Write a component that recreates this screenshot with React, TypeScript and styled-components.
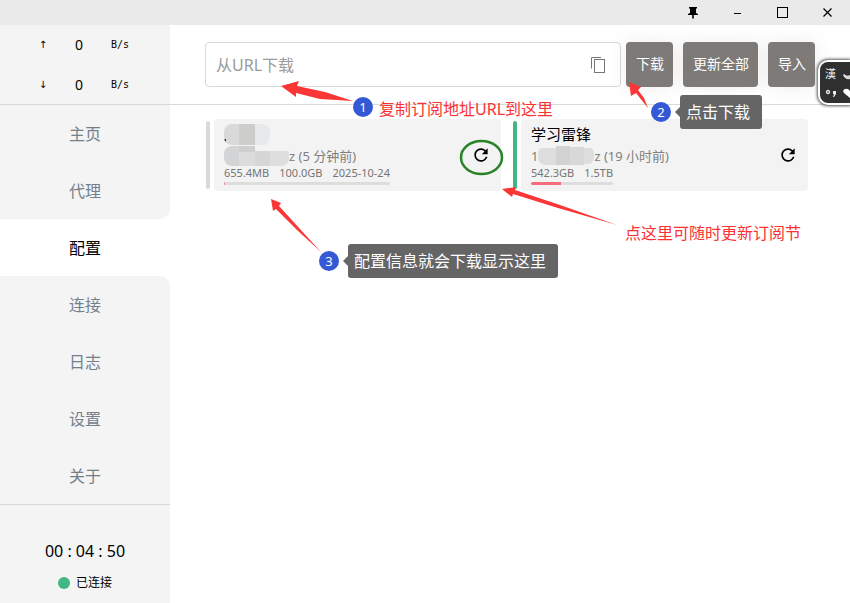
import React from "react";
import styled, { createGlobalStyle } from "styled-components";
import { MdRefresh } from "react-icons/md";

const GlobalStyle = createGlobalStyle`
  * { box-sizing: border-box; }
  body {
    margin: 0;
    background: #fff;
    color: #000;
    font-family: "Noto Sans", "Noto Sans CJK SC", sans-serif;
    font-size: 16px;
  }
  button, input { font-family: inherit; }
`;

const Page = styled.div`
  position: relative;
  display: flex;
  flex-direction: column;
  min-height: 100vh;
  overflow: hidden;
`;

const TitleBar = styled.header`
  display: flex;
  justify-content: flex-end;
  height: 25px;
  background: #eaeaea;
`;

const WindowButton = styled.button`
  display: flex;
  align-items: center;
  justify-content: center;
  width: 45px;
  padding: 0;
  border: 0;
  background: transparent;
`;

const Body = styled.div`
  display: flex;
  flex: 1;
`;

const Sidebar = styled.aside`
  display: flex;
  flex-direction: column;
  flex: 0 0 170px;
`;

const Traffic = styled.div`
  height: 80px;
  padding-left: 25px;
  background: #f4f4f4;
  border-bottom: 1px solid #d9d9d9;
`;

const TrafficRow = styled.div`
  display: grid;
  grid-template-columns: 36px 36px 46px;
  align-items: center;
  justify-items: center;
  height: 40px;
  font-size: 14px;
  line-height: 20px;
`;

const TrafficArrow = styled.span`
  font-family: "DejaVu Sans", sans-serif;
  font-size: 10px;
`;

const TrafficUnit = styled.span`
  font-family: "DejaVu Sans Mono", monospace;
  font-size: 10px;
`;

const Nav = styled.nav`
  display: flex;
  flex-direction: column;
`;

const NavLink = styled.a<{ $active?: boolean; $edge?: "above" | "below" }>`
  display: flex;
  align-items: center;
  justify-content: center;
  height: 57px;
  padding-bottom: 2px;
  text-decoration: none;
  color: ${(p) => (p.$active ? "#000" : "#73808c")};
  background: ${(p) => (p.$active ? "#fff" : "#f4f4f4")};
  border-bottom-right-radius: ${(p) => (p.$edge === "above" ? "10px" : "0")};
  border-top-right-radius: ${(p) => (p.$edge === "below" ? "10px" : "0")};
`;

const Status = styled.div`
  display: flex;
  flex: 1;
  flex-direction: column;
  align-items: center;
  gap: 10px;
  padding-top: 35px;
  background: #f4f4f4;
  border-top: 1px solid #d9d9d9;
  line-height: 22px;
`;

const Connection = styled.div`
  display: flex;
  align-items: center;
  gap: 6px;
  font-size: 12px;
`;

const Dot = styled.span`
  width: 12px;
  height: 12px;
  border-radius: 50%;
  background: #41b883;
`;

const Main = styled.main`
  flex: 1;
  min-width: 0;
`;

const Toolbar = styled.form`
  display: flex;
  gap: 10px;
  height: 80px;
  padding: 17px 35px;
  border-bottom: 1px solid #d9d9d9;
`;

const UrlField = styled.div`
  display: flex;
  flex: 1;
  align-items: center;
  height: 45px;
  margin-right: -5px;
  padding: 0 14px 0 10px;
  border: 1px solid #d8d8d8;
  border-radius: 4px;
  background: #fff;
`;

const UrlInput = styled.input`
  flex: 1;
  min-width: 0;
  padding: 0;
  border: 0;
  outline: 0;
  font-size: 16px;
  &::placeholder { color: #9b9b9b; }
`;

const IconButton = styled.button`
  display: flex;
  align-items: center;
  justify-content: center;
  padding: 0;
  border: 0;
  background: transparent;
  color: #000;
`;

const ActionButton = styled.button`
  height: 45px;
  padding: 0 9px 4px 10px;
  border: 0;
  border-radius: 4px;
  background: #7d7a78;
  color: #fff;
  font-size: 14px;
  white-space: nowrap;
  box-shadow: 0 0 20px rgba(0, 0, 0, 0.08);
`;

const Profiles = styled.div`
  display: grid;
  grid-template-columns: 1fr 1fr;
  gap: 12px;
  padding: 14px 42px 0 36px;
`;

const Profile = styled.article`
  display: flex;
  align-items: center;
  gap: 4px;
`;

const Marker = styled.span<{ $active?: boolean }>`
  width: 4px;
  height: 68px;
  border-radius: 2px;
  background: ${(p) => (p.$active ? "#41b883" : "#d9d9d9")};
`;

const Card = styled.div`
  display: flex;
  flex: 1;
  align-items: center;
  justify-content: space-between;
  height: 72px;
  padding: 0 10px;
  border-radius: 4px;
  background: #f3f3f3;
`;

const Details = styled.div`
  display: flex;
  flex-direction: column;
  align-items: flex-start;
  padding-bottom: 2px;
  white-space: nowrap;
`;

const Title = styled.div`
  display: flex;
  height: 22px;
  line-height: 20px;
  font-size: 15px;
`;

const Source = styled.div`
  display: flex;
  align-items: center;
  height: 20px;
  font-size: 13px;
  color: #808080;
`;

const Usage = styled.div`
  font-size: 11px;
  line-height: 14px;
  color: #757575;
`;

const Stats = styled.div`
  display: flex;
  gap: 10px;
`;

const Meter = styled.div`
  height: 3px;
  margin-top: 2px;
  border-radius: 2px;
  background: #dddddd;
  overflow: hidden;
`;

const MeterFill = styled.div`
  height: 3px;
  background: #f56c7c;
`;

const Drawing = styled.svg`
  position: absolute;
  top: 0;
  left: 0;
  width: 850px;
  height: 603px;
  pointer-events: none;
`;

const Note = styled.div<{ $x: number; $y: number }>`
  position: absolute;
  left: ${(p) => p.$x}px;
  top: ${(p) => p.$y}px;
  line-height: 24px;
  color: #fb3232;
  white-space: nowrap;
`;

const Badge = styled.div<{ $x: number; $y: number }>`
  position: absolute;
  left: ${(p) => p.$x}px;
  top: ${(p) => p.$y}px;
  width: 20px;
  height: 20px;
  border-radius: 50%;
  background: #3558d4;
  color: #fff;
  font-size: 13px;
  line-height: 20px;
  text-align: center;
`;

const Callout = styled.div<{ $x: number; $y: number }>`
  position: absolute;
  left: ${(p) => p.$x}px;
  top: ${(p) => p.$y}px;
  padding: 5px 12px 5px 6px;
  border-radius: 3px;
  background: #656565;
  color: #fff;
  line-height: 24px;
  white-space: nowrap;
  &::before {
    content: "";
    position: absolute;
    left: -5px;
    top: 12px;
    border: 5px solid transparent;
    border-left-width: 0;
    border-right-color: #656565;
  }
`;

const ImeBar = styled.div`
  position: absolute;
  right: 0;
  top: 60px;
  display: grid;
  grid-template-columns: 15px 8px;
  grid-template-rows: 19px 19px;
  align-items: center;
  column-gap: 2px;
  height: 45px;
  padding: 2px 0 2px 5px;
  border: 2px solid #fff;
  border-right: 0;
  border-radius: 10px 0 0 10px;
  background: #303030;
  color: #eee;
  font-size: 11px;
  line-height: 18px;
  box-shadow: 0 0 3px 1px #555;
`;

type Block = [x: number, y: number, w: number, h: number, fill: string];

function Mosaic({ id, width, height, blocks }: { id: string; width: number; height: number; blocks: Block[] }) {
  return (
    <svg width={width} height={height} aria-hidden="true">
      <clipPath id={id}>
        <rect width={width} height={height} rx="8" />
      </clipPath>
      <g clipPath={`url(#${id})`}>
        {blocks.map(([x, y, w, h, fill]) => (
          <rect key={`${x}-${y}`} x={x} y={y} width={w} height={h} fill={fill} />
        ))}
      </g>
    </svg>
  );
}

const navItems: { label: string; active?: boolean; edge?: "above" | "below" }[] = [
  { label: "主页" },
  { label: "代理", edge: "above" },
  { label: "配置", active: true },
  { label: "连接", edge: "below" },
  { label: "日志" },
  { label: "设置" },
  { label: "关于" },
];

const profiles = [
  {
    active: false,
    title: (
      <Mosaic id="name1" width={46} height={21} blocks={[
        [0, 0, 15, 21, "#d9d9d9"], [15, 0, 16, 21, "#cdcdcb"], [31, 0, 15, 21, "#e6e8ea"], [0, 15, 2, 3, "#333"],
      ]} />
    ),
    source: (
      <>
        <Mosaic id="host1" width={65} height={20} blocks={[
          [0, 0, 15, 20, "#d2d4d6"], [15, 0, 16, 6, "#cfcfcf"], [15, 6, 16, 14, "#dcdcdc"], [31, 5, 15, 15, "#d6d6d6"], [46, 5, 19, 15, "#dedede"],
        ]} />
        z (5 分钟前)
      </>
    ),
    stats: ["655.4MB", "100.0GB", "2025-10-24"],
    used: 0.5,
  },
  {
    active: true,
    title: "学习雷锋",
    source: (
      <>
        1
        <Mosaic id="host2" width={56} height={19} blocks={[
          [0, 2, 18, 17, "#dddddd"], [18, 0, 14, 19, "#d2d2d2"], [32, 1, 14, 18, "#d8d8d8"], [46, 2, 10, 16, "#dedede"],
        ]} />
        z (19 小时前)
      </>
    ),
    stats: ["542.3GB", "1.5TB"],
    used: 36,
  },
];

export default function App() {
  return (
    <Page>
      <GlobalStyle />
      <TitleBar>
        <WindowButton aria-label="置顶">
          <svg width="12" height="12" viewBox="0 0 12 12">
            <path d="M2 0H10V1.5H9V6L11 7V8H6.8V11L6 12L5.2 11V8H1V7L3 6V1.5H2Z" fill="#000" />
          </svg>
        </WindowButton>
        <WindowButton aria-label="最小化">
          <svg width="10" height="10" viewBox="0 0 10 10"><path d="M1 5.5H8" stroke="#000" /></svg>
        </WindowButton>
        <WindowButton aria-label="最大化">
          <svg width="11" height="11" viewBox="0 0 11 11"><rect x=".5" y=".5" width="10" height="10" fill="none" stroke="#000" /></svg>
        </WindowButton>
        <WindowButton aria-label="关闭">
          <svg width="9" height="9" viewBox="0 0 9 9"><path d="M.5 .5L8.5 8.5M8.5 .5L.5 8.5" stroke="#000" strokeWidth="1.2" /></svg>
        </WindowButton>
      </TitleBar>

      <Body>
        <Sidebar>
          <Traffic>
            {["↑", "↓"].map((arrow) => (
              <TrafficRow key={arrow}>
                <TrafficArrow>{arrow}</TrafficArrow>
                <span>0</span>
                <TrafficUnit>B/s</TrafficUnit>
              </TrafficRow>
            ))}
          </Traffic>
          <Nav>
            {navItems.map((item) => (
              <NavLink key={item.label} href="#" $active={item.active} $edge={item.edge}>
                {item.label}
              </NavLink>
            ))}
          </Nav>
          <Status>
            <div>00 : 04 : 50</div>
            <Connection><Dot />已连接</Connection>
          </Status>
        </Sidebar>

        <Main>
          <Toolbar onSubmit={(e) => e.preventDefault()}>
            <UrlField>
              <UrlInput type="text" placeholder="从URL下载" aria-label="从URL下载" />
              <IconButton type="button" aria-label="粘贴">
                <svg width="16" height="18" viewBox="0 0 16 18" fill="none" stroke="#777">
                  <path d="M1.5 12.5V1.5H11" />
                  <rect x="4.5" y="3.5" width="10" height="13" />
                </svg>
              </IconButton>
            </UrlField>
            <ActionButton type="submit">下载</ActionButton>
            <ActionButton type="button">更新全部</ActionButton>
            <ActionButton type="button">导入</ActionButton>
          </Toolbar>
          <Profiles>
            {profiles.map((p) => (
              <Profile key={p.stats[0]}>
                <Marker $active={p.active} />
                <Card>
                  <Details>
                    <Title>{p.title}</Title>
                    <Source>{p.source}</Source>
                    <Usage>
                      <Stats>{p.stats.map((s) => <span key={s}>{s}</span>)}</Stats>
                      <Meter><MeterFill style={{ width: `${p.used}%` }} /></Meter>
                    </Usage>
                  </Details>
                  <IconButton type="button" aria-label="更新"><MdRefresh size={20} /></IconButton>
                </Card>
              </Profile>
            ))}
          </Profiles>
        </Main>
      </Body>

      <Drawing viewBox="0 0 850 603" aria-hidden="true">
        <g fill="#fb3636">
          <path d="M281 86L299 81L297 86L325 92L353 101L320 99L296 93L296 97Z" />
          <path d="M629 82L641 87L638 90L644 98L648 108L636 93L631 96Z" />
          <path d="M271 199L281 203L279 206L300 229L321 252L297 230L276 209L273 211Z" />
          <path d="M502 189L516 187L515 190L560 205L617 225L558 208L513 194L512 197Z" />
        </g>
        <ellipse cx="481.5" cy="157.5" rx="20.5" ry="16.5" fill="none" stroke="#288328" strokeWidth="2.5" />
      </Drawing>
      <Badge $x={353} $y={97}>1</Badge>
      <Note $x={379} $y={97}>复制订阅地址URL到这里</Note>
      <Badge $x={651} $y={102}>2</Badge>
      <Callout $x={680} $y={95}>点击下载</Callout>
      <Badge $x={319} $y={251}>3</Badge>
      <Callout $x={348} $y={244}>配置信息就会下载显示这里</Callout>
      <Note $x={625} $y={221}>点这里可随时更新订阅节</Note>

      <ImeBar>
        <span>漢</span>
        <svg width="8" height="12" viewBox="0 0 8 12"><path d="M2 6Q5 9 8 7V11Q3 12 1 7Z" fill="#ddd" /></svg>
        <svg width="14" height="12" viewBox="0 0 14 12">
          <circle cx="3" cy="5" r="1.5" fill="none" stroke="#eee" strokeWidth="1.3" />
          <path d="M8 4H11V7L9 10H8L9 7H8Z" fill="#eee" />
        </svg>
        <svg width="8" height="12" viewBox="0 0 8 12"><path d="M8 11L2 6Q0 3 3 2Q6 1 8 4Z" fill="#fff" /></svg>
      </ImeBar>
    </Page>
  );
}
